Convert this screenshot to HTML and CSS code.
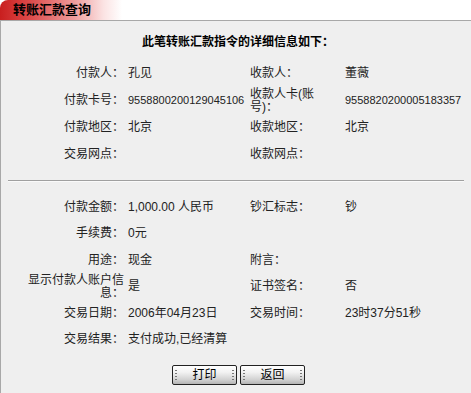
FILE: index.html
```html
<!DOCTYPE html>
<html lang="zh-CN">
<head>
    <meta charset="UTF-8">
    <title>转账汇款查询</title>
    <link rel="stylesheet" href="styles.css">
</head>
<body>

<!-- Reiter oben -->
<div class="tab-bar">
    <div class="tab">转账汇款查询</div>
</div>

<div class="panel">
    <h2 class="panel-title">此笔转账汇款指令的详细信息如下：</h2>

    <!-- Konten -->
    <div class="info-grid">
        <div class="lbl">付款人：</div>
        <div class="val">孔见</div>
        <div class="lbl-r">收款人：</div>
        <div class="val">董薇</div>

        <div class="lbl">付款卡号：</div>
        <div class="val"><span class="num">9558800200129045106</span></div>
        <div class="lbl-r">收款人卡(账号)：</div>
        <div class="val"><span class="num">9558820200005183357</span></div>

        <div class="lbl">付款地区：</div>
        <div class="val">北京</div>
        <div class="lbl-r">收款地区：</div>
        <div class="val">北京</div>

        <div class="lbl">交易网点：</div>
        <div class="val"></div>
        <div class="lbl-r">收款网点：</div>
        <div class="val"></div>
    </div>

    <hr class="divider">

    <!-- Betrag und Status -->
    <div class="info-grid info-grid-b">
        <div class="lbl">付款金额：</div>
        <div class="val">1,000.00 人民币</div>
        <div class="lbl-r">钞汇标志：</div>
        <div class="val">钞</div>

        <div class="lbl">手续费：</div>
        <div class="val">0元</div>
        <div class="lbl-r"></div>
        <div class="val"></div>

        <div class="lbl">用途：</div>
        <div class="val">现金</div>
        <div class="lbl-r">附言：</div>
        <div class="val"></div>

        <div class="lbl">显示付款人账户信息：</div>
        <div class="val">是</div>
        <div class="lbl-r">证书签名：</div>
        <div class="val">否</div>

        <div class="lbl">交易日期：</div>
        <div class="val">2006年04月23日</div>
        <div class="lbl-r">交易时间：</div>
        <div class="val">23时37分51秒</div>

        <div class="lbl">交易结果：</div>
        <div class="val val-wide">支付成功,已经清算</div>
    </div>

    <div class="buttons">
        <button class="btn">打印</button>
        <button class="btn">返回</button>
    </div>
</div>

</body>
</html>
```

FILE: styles.css
```css
body {
    margin: 0;
    background-color: #fff;
    color: #222;
    font-family: "Liberation Sans", "Noto Sans CJK SC", sans-serif;
    font-size: 12px;
}

.tab-bar {
    height: 20px;
}

.tab {
    width: 122px;
    height: 20px;
    box-sizing: border-box;
    padding-left: 13px;
    border-top-left-radius: 8px;
    background: linear-gradient(90deg, #c91f1f 0%, #dd4b4b 25%, #ee9a9a 60%, #fbe3e3 85%, #fff 100%);
    font-size: 13px;
    font-weight: bold;
    line-height: 20px;
    color: #000;
}

.panel {
    height: 373px;
    box-sizing: border-box;
    padding-top: 14px;
    border-top: 1px solid #a8a8a8;
    border-left: 1px solid #a8a8a8;
    background-color: #efefef;
}

.panel-title {
    margin: 0;
    padding-left: 4px;
    font-size: 12px;
    font-weight: bold;
    line-height: 14px;
    text-align: center;
    color: #000;
}

.info-grid {
    display: grid;
    grid-template-columns: 123px 122px 95px 1fr;
    grid-auto-rows: 27px;
    align-items: center;
    line-height: 13px;
    margin-top: 11px;
}

.info-grid-b {
    grid-auto-rows: 26.5px;
    margin-top: 12px;
}

.lbl {
    padding-left: 8px;
    text-align: right;
}

.lbl-r {
    padding-left: 4px;
    padding-right: 20px;
}

.val {
    padding-left: 4px;
    white-space: nowrap;
}

.val-wide {
    grid-column: span 3;
}

.num {
    font-size: 11px;
}

.divider {
    height: 0;
    margin: 12px 7px 0 7px;
    border: 0;
    border-top: 1px solid #a0a0a0;
    border-bottom: 1px solid #fafafa;
}

.buttons {
    display: flex;
    justify-content: center;
    gap: 3px;
    margin-top: 12px;
    padding-left: 5px;
}

.btn {
    position: relative;
    width: 65px;
    height: 20px;
    padding: 0;
    border: 1px solid #222;
    border-radius: 2px;
    background: linear-gradient(#ffffff 0%, #f2f2f2 35%, #d2d2d2 75%, #b4b4b4 100%);
    font-family: "Liberation Sans", "Noto Sans CJK SC", sans-serif;
    font-size: 12px;
    line-height: 18px;
    color: #000;
    cursor: pointer;
}

/* Punktleisten links und rechts */
.btn::before,
.btn::after {
    content: "";
    position: absolute;
    top: 3px;
    bottom: 3px;
    width: 2px;
    background-image: radial-gradient(circle, #777 0.8px, transparent 1px);
    background-size: 2px 3px;
}

.btn::before {
    left: 2px;
}

.btn::after {
    right: 2px;
}
```
